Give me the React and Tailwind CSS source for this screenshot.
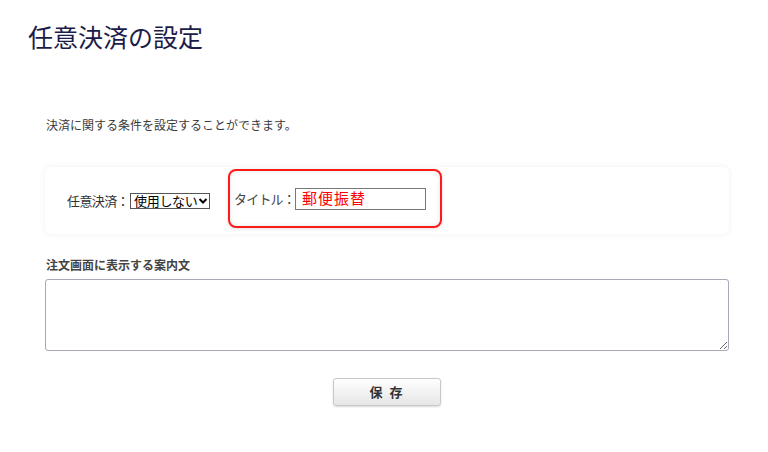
import React from 'react';

const font = { fontFamily: '"Noto Sans CJK JP", "Noto Sans", sans-serif' };

const App = () => {
  return (
    <div className="w-[768px] h-[452px] bg-white text-[#444]" style={font}>
      <h1 className="pl-[28px] pt-[18px] text-[25px] leading-[36px] text-[#1c1c48] font-normal">
        任意決済の設定
      </h1>

      <div className="w-[684px] ml-[45px] pt-[62px]">
        <p className="pl-px text-[12px] leading-[18px] text-[#3a3a3a]">
          決済に関する条件を設定することができます。
        </p>

        <div className="mt-[33px] h-[67px] rounded-md bg-white shadow-[0_0_6px_rgba(0,0,0,0.06)] flex items-center pl-[22px]">
          <div className="flex items-center text-[13px] tracking-[-0.6px] text-[#333]">
            <span className="whitespace-nowrap">任意決済：</span>
            <div className="ml-[1px] flex shrink-0 items-center justify-between h-[16px] w-[80px] overflow-hidden border border-[#555] bg-white pl-[3px] pr-[2px] text-[13px] leading-none text-black tracking-[-0.3px] whitespace-nowrap">
              <span>使用しない</span>
              <svg width="10" height="8" viewBox="0 0 10 8" className="shrink-0">
                <path d="M1.5 2 L5 5.5 L8.5 2" fill="none" stroke="#000" strokeWidth="2" />
              </svg>
            </div>
          </div>

          <div className="self-start mt-[2px] ml-[18px] w-[214px] h-[59px] rounded-lg border-2 border-[#ff1a1a] shadow-[inset_0_0_5px_rgba(0,0,0,0.1),0_1px_4px_rgba(0,0,0,0.12)] flex items-center pl-[4px]">
            <span className="whitespace-nowrap text-[13px] tracking-[-0.8px] text-[#444]">タイトル：</span>
            <input
              defaultValue="郵便振替"
              className="w-[131px] h-[22px] border border-[#777] px-[6px] text-[15px] tracking-[1px] text-[#ff0000] outline-none"
            />
          </div>
        </div>

        <div className="mt-[22px] pl-px text-[12px] leading-[18px] font-bold text-[#444]">
          注文画面に表示する案内文
        </div>
        <textarea className="mt-[5px] block w-[684px] h-[72px] rounded-[3px] border border-[#a8a8b8] outline-none" />

        <div className="flex justify-center mt-[27px]">
          <button className="w-[108px] h-[28px] rounded-[3px] border border-[#c8c8c8] bg-gradient-to-b from-[#ffffff] to-[#e6e6e6] shadow-[0_1px_2px_rgba(0,0,0,0.15)] text-[13px] font-bold text-[#333] tracking-[2px]">
            保 存
          </button>
        </div>
      </div>
    </div>
  );
};

export default App;
